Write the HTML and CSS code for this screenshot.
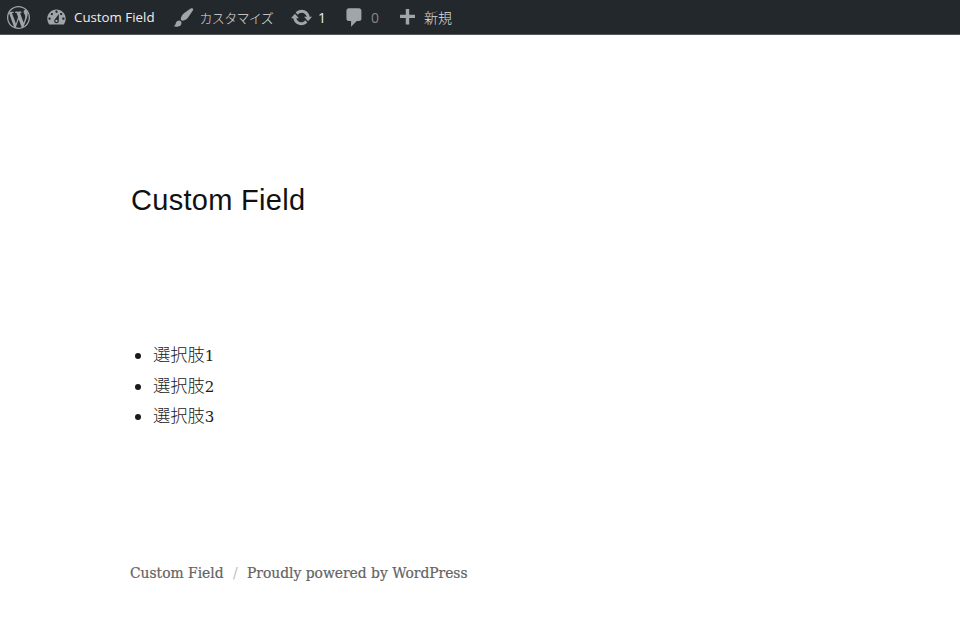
FILE: index.html
```html
<!DOCTYPE html>
<html lang="ja">
<head>
  <meta charset="utf-8">
  <title>Custom Field</title>
  <link rel="stylesheet" href="styles.css">
</head>
<body>

  <div class="admin-bar">
    <a class="bar-item logo-item" href="#">
      <svg class="bar-logo" viewBox="0 0 20 20"><path d="M20 10c0-5.51-4.49-10-10-10C4.48 0 0 4.49 0 10c0 5.52 4.48 10 10 10 5.51 0 10-4.48 10-10zM7.78 15.37L4.37 6.22c.55-.02 1.17-.08 1.17-.08.5-.06.44-1.13-.06-1.11 0 0-1.45.11-2.37.11-.18 0-.37 0-.58-.01C4.12 2.69 6.87 1.11 10 1.11c2.33 0 4.45.87 6.05 2.34-.68-.11-1.65.39-1.65 1.58 0 .74.45 1.36.9 2.1.35.61.55 1.36.55 2.46 0 1.49-1.4 5-1.4 5l-3.03-8.37c.54-.02.82-.17.82-.17.5-.05.44-1.25-.06-1.22 0 0-1.44.12-2.38.12-.87 0-2.33-.12-2.33-.12-.5-.03-.56 1.2-.06 1.22l.92.08 1.26 3.41zM17.41 10c.24-.64.74-1.87.43-4.25.7 1.29 1.05 2.71 1.05 4.25 0 3.29-1.73 6.24-4.4 7.78.97-2.59 1.94-5.2 2.92-7.78zM6.1 18.09C3.12 16.65 1.11 13.53 1.11 10c0-1.3.23-2.48.72-3.59C3.25 10.3 4.67 14.2 6.1 18.09zm4.03-6.63l2.58 6.98c-.86.29-1.76.45-2.71.45-.79 0-1.57-.11-2.29-.33.81-2.38 1.62-4.74 2.42-7.1z"/></svg>
    </a>
    <a class="bar-item" href="#">
      <svg class="bar-icon" viewBox="0 0 20 20"><path fill-rule="evenodd" d="M3.76 16h12.48c1.1-1.37 1.76-3.11 1.76-5 0-4.42-3.58-8-8-8s-8 3.58-8 8c0 1.89.66 3.63 1.76 5zM10 4c.55 0 1 .45 1 1s-.45 1-1 1-1-.45-1-1 .45-1 1-1zM6 6c.55 0 1 .45 1 1s-.45 1-1 1-1-.45-1-1 .45-1 1-1zm8 0c.55 0 1 .45 1 1s-.45 1-1 1-1-.45-1-1 .45-1 1-1zm-5.37 5.55L12 7v6c0 1.1-.9 2-2 2s-2-.9-2-2c0-.57.24-1.08.63-1.45zM4 10c.55 0 1 .45 1 1s-.45 1-1 1-1-.45-1-1 .45-1 1-1zm12 0c.55 0 1 .45 1 1s-.45 1-1 1-1-.45-1-1 .45-1 1-1zm-5 3c0-.55-.45-1-1-1s-1 .45-1 1 .45 1 1 1 1-.45 1-1z"/></svg>
      <span class="bar-title">Custom Field</span>
    </a>
    <a class="bar-item" href="#">
      <svg class="bar-icon" viewBox="0 0 20 20"><path d="M18.33 3.57s.27-.8-.31-1.36c-.53-.52-1.22-.24-1.22-.24-.61.3-5.76 3.47-7.67 5.57-.86.96-2.06 3.79-1.09 4.82.92.98 3.96-.17 4.79-1 2.06-2.06 5.21-7.17 5.5-7.79zM1.4 17.65c2.37-1.56 1.46-3.41 3.23-4.64.93-.65 2.22-.62 3.08.29.63.67.8 2.57-.16 3.46-1.57 1.45-4 1.55-6.15.89z"/></svg>
      <span class="bar-jp kana">カスタマイズ</span>
    </a>
    <a class="bar-item" href="#">
      <svg class="bar-icon" viewBox="0 0 20 20"><path d="M10.2 3.28c3.53 0 6.43 2.61 6.92 6h2.08l-3.5 4-3.5-4h2.32c-.45-1.97-2.21-3.45-4.32-3.45-1.45 0-2.73.71-3.54 1.78L4.95 5.66C6.23 4.2 8.11 3.28 10.2 3.28zm-.4 13.44c-3.52 0-6.43-2.61-6.92-6H.8l3.5-4c1.17 1.33 2.33 2.67 3.5 4H5.48c.45 1.97 2.21 3.45 4.32 3.45 1.45 0 2.73-.71 3.54-1.78l1.71 1.95c-1.28 1.46-3.15 2.38-5.25 2.38z"/></svg>
      <span class="bar-count">1</span>
    </a>
    <a class="bar-item" href="#">
      <svg class="bar-icon" viewBox="0 0 20 20"><path d="M5 2h9c1.1 0 2 .9 2 2v7c0 1.1-.9 2-2 2h-2l-5 5v-5H5c-1.1 0-2-.9-2-2V4c0-1.1.9-2 2-2z"/></svg>
      <span class="bar-count muted">0</span>
    </a>
    <a class="bar-item" href="#">
      <svg class="bar-icon" viewBox="0 0 20 20"><path d="M16.500 7.500v3h-5V16h-3v-5.500h-5v-3h5V2.500h3v5z"/></svg>
      <span class="bar-jp">新規</span>
    </a>
  </div>

  <div class="site">
    <h1 class="page-title">Custom Field</h1>

    <ul class="choices">
      <li>選択肢<span class="num">1</span></li>
      <li>選択肢<span class="num">2</span></li>
      <li>選択肢<span class="num">3</span></li>
    </ul>

    <footer class="site-footer">
      <a href="#">Custom Field</a>
      <span class="sep">/</span>
      <a href="#">Proudly powered by WordPress</a>
    </footer>
  </div>

</body>
</html>
```

FILE: styles.css
```css
html, body {
  margin: 0;
  padding: 0;
}

body {
  background: #fff;
  color: #1a1a1a;
  font-family: "Noto Sans CJK JP", sans-serif;
  height: 618px;
  overflow: hidden;
}

a {
  text-decoration: none;
  color: inherit;
}

.admin-bar {
  display: flex;
  align-items: center;
  height: 34px;
  padding-left: 7px;
  background: #23282d;
  color: #eee;
  border-bottom: 1px solid #555;
  font-family: "Open Sans", "Noto Sans CJK JP", sans-serif;
  font-size: 13.300px;
}

.bar-item {
  display: flex;
  align-items: center;
  margin-right: 17px;
}

.logo-item {
  margin-right: 15px;
}

.bar-logo {
  width: 23px;
  height: 23px;
  fill: #a0a5aa;
}

.bar-icon {
  width: 23px;
  height: 23px;
  fill: #a0a5aa;
  margin-right: 5px;
}

.bar-title {
  margin-left: 1px;
}

.bar-jp {
  font-weight: 300;
  font-family: "Noto Sans CJK JP", sans-serif;
  font-size: 14px;
  color: #ddd;
}

.kana {
  font-size: 13px;
  letter-spacing: -.7px;
}

.bar-count {
  font-size: 14px;
  color: #eee;
}

.muted {
  color: #82878c;
}

.site {
  padding-left: 131px;
}

.page-title {
  margin: 146px 0 0;
  font-family: "Liberation Sans", "Noto Sans CJK JP", sans-serif;
  font-size: 29px;
  font-weight: 400;
  letter-spacing: .3px;
  line-height: 38px;
  color: #111;
}

.choices {
  margin: 120px 0 0;
  padding: 0 0 0 22px;
  font-size: 17.300px;
  font-weight: 300;
}

.choices li {
  height: 30.500px;
  line-height: 30.500px;
}

.choices li::marker {
  font-size: 15px;
}

.num {
  font-family: "DejaVu Serif", serif;
  font-size: 15px;
  font-weight: 400;
  line-height: 1;
}

.site-footer {
  margin-top: 134px;
  margin-left: -1px;
  font-family: "DejaVu Serif", serif;
  font-size: 13.850px;
  color: #636363;
  -webkit-text-stroke: .2px #636363;
}

.sep {
  margin: 0 5px;
  color: #bbb;
  -webkit-text-stroke: 0;
}
```
